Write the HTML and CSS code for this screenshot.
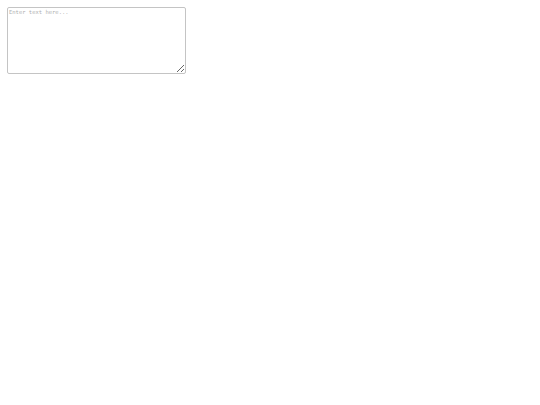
FILE: index.html
```html
<!DOCTYPE html>
<html>
<head>
<meta charset="utf-8">
<link rel="stylesheet" href="styles.css">
</head>
<body class="page">
<textarea class="note" placeholder="Enter text here..."></textarea>
</body>
</html>
```
FILE: styles.css
```css
.page {
  margin: 7px;
  background: #ffffff;
}
.note {
  box-sizing: border-box;
  display: block;
  width: 179px;
  height: 67px;
  margin: 0;
  padding: 1px 1px;
  border: 1px solid #c4c4c4;
  border-radius: 2px;
  font-family: "DejaVu Sans Mono", "Liberation Mono", monospace;
  font-size: 5.5px;
  line-height: 1.2;
  color: #333;
}
.note::placeholder {
  color: #b0b0b0;
}
```
